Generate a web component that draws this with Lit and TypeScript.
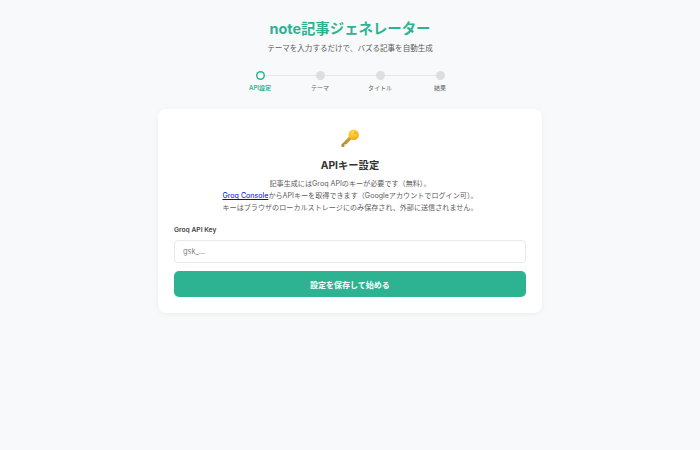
import { LitElement, html, css } from "lit";
import { customElement } from "lit/decorators.js";

const STEPS = ["API設定", "テーマ", "タイトル", "結果"];

@customElement("app-root")
export class AppRoot extends LitElement {
  static styles = css`
    :host {
      display: block;
      min-height: 450px;
      background: #f8f9fa;
      font-family: Inter, "Noto Sans CJK JP", sans-serif;
      color: #333;
      box-sizing: border-box;
    }
    .page {
      display: flex;
      flex-direction: column;
      align-items: center;
      padding-top: 18px;
    }
    h1 {
      margin: 0;
      font-size: 14.4px;
      line-height: 21px;
      font-weight: 700;
      color: #2db391;
    }
    .sub {
      margin: 3px 0 0;
      font-size: 7.55px;
      line-height: 14px;
      color: #5c5c5c;
    }
    .steps {
      display: flex;
      margin-top: 15px;
    }
    .step {
      position: relative;
      width: 60px;
      display: flex;
      flex-direction: column;
      align-items: center;
      gap: 3px;
    }
    .step:not(:last-child)::after {
      content: "";
      position: absolute;
      left: 30px;
      top: 4px;
      width: 60px;
      height: 1px;
      background: #e6e7e9;
    }
    .dot {
      position: relative;
      z-index: 1;
      width: 9px;
      height: 9px;
      box-sizing: border-box;
      border-radius: 50%;
      background: #dddee0;
    }
    .step.active .dot {
      background: #fff;
      box-shadow: inset 0 0 0 1.5px #2db391;
    }
    .label {
      font-size: 6px;
      line-height: 10px;
      color: #666;
    }
    .step.active .label {
      color: #2db391;
      font-weight: 600;
    }
    .card {
      box-sizing: border-box;
      width: 384px;
      margin-top: 16px;
      padding: 16px;
      background: #fff;
      border-radius: 8px;
      box-shadow: 0 1px 5px rgba(0, 0, 0, 0.06);
    }
    .head {
      display: flex;
      flex-direction: column;
      align-items: center;
      text-align: center;
    }
    .key {
      display: block;
      width: 20px;
      height: 20px;
      margin-top: 3px;
    }
    h2 {
      margin: 10px 0 0;
      font-size: 10.3px;
      line-height: 15px;
      font-weight: 700;
      color: #333;
    }
    .desc {
      margin: 5px 0 0;
      font-size: 7.1px;
      line-height: 12px;
      color: #5c5c5c;
    }
    a {
      color: #0000ee;
      text-decoration: underline;
    }
    .field {
      margin-top: 11px;
    }
    label {
      display: block;
      font-size: 6.7px;
      line-height: 11px;
      font-weight: 600;
      color: #444;
    }
    input {
      display: block;
      box-sizing: border-box;
      width: 100%;
      height: 23px;
      margin-top: 4px;
      padding: 0 8px;
      background: #fff;
      border: 1px solid #e8e9eb;
      border-radius: 4px;
      font: 7.4px Inter, "Noto Sans CJK JP", sans-serif;
      outline: none;
    }
    input::placeholder {
      color: #808080;
    }
    button {
      display: block;
      width: 100%;
      height: 26px;
      margin-top: 8px;
      border: none;
      border-radius: 5px;
      background: #2db391;
      color: #fff;
      font: 600 8px Inter, "Noto Sans CJK JP", sans-serif;
    }
  `;

  render() {
    return html`
      <div class="page">
        <h1>note記事ジェネレーター</h1>
        <p class="sub">テーマを入力するだけで、バズる記事を自動生成</p>
        <div class="steps">
          ${STEPS.map(
            (s, i) => html`
              <div class="step ${i === 0 ? "active" : ""}">
                <span class="dot"></span>
                <span class="label">${s}</span>
              </div>
            `
          )}
        </div>
        <section class="card">
          <div class="head">
            <svg class="key" viewBox="0 0 20 20" aria-hidden="true">
              <defs>
                <radialGradient id="kh" cx="0.42" cy="0.3" r="0.8">
                  <stop offset="0" stop-color="#ffdc4a" />
                  <stop offset="0.6" stop-color="#fbbd22" />
                  <stop offset="1" stop-color="#e99a10" />
                </radialGradient>
                <linearGradient id="ks" x1="0" y1="1" x2="1" y2="0">
                  <stop offset="0" stop-color="#a98a3c" />
                  <stop offset="1" stop-color="#dca52a" />
                </linearGradient>
              </defs>
              <path
                fill="url(#ks)"
                d="M10.3 7.6 12.6 10 5.9 16.7 4.9 15.9 4.1 16.7 5 17.6 3.8 18.8C3.4 19.2 2.6 19.2 2.1 18.8L1.5 18.2C1.1 17.7 1.1 17 1.5 16.5Z"
              />
              <circle cx="13.7" cy="6.7" r="5.2" fill="url(#kh)" />
              <ellipse cx="15.3" cy="5" rx="1.2" ry="1" fill="#f4a912" />
            </svg>
            <h2>APIキー設定</h2>
            <p class="desc">
              記事生成にはGroq APIのキーが必要です（無料）。<br />
              <a href="#">Groq Console</a>からAPIキーを取得できます（Googleアカウントでログイン可）。<br />
              キーはブラウザのローカルストレージにのみ保存され、外部に送信されません。
            </p>
          </div>
          <div class="field">
            <label>Groq API Key</label>
            <input placeholder="gsk_..." />
          </div>
          <button>設定を保存して始める</button>
        </section>
      </div>
    `;
  }
}
